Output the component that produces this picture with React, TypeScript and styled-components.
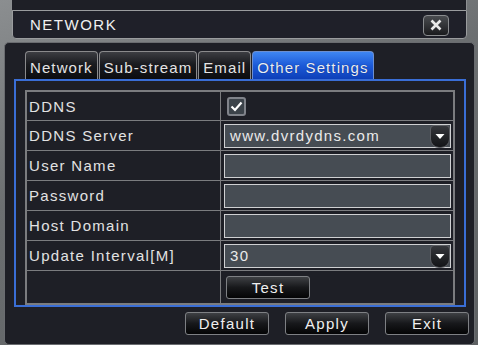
import React from 'react';
import styled, { createGlobalStyle } from 'styled-components';

const GlobalStyle = createGlobalStyle`
  html, body {
    margin: 0;
    padding: 0;
  }
  body {
    width: 478px;
    height: 345px;
    overflow: hidden;
    background: linear-gradient(160deg, #8b8e90 0%, #6c6f71 40%, #5e6163 100%);
    font-family: 'Liberation Sans', Arial, sans-serif;
  }
`;

const Screen = styled.div`
  width: 478px;
  height: 345px;
  display: flex;
  flex-direction: column;
`;

const TopStrip = styled.div`
  height: 10px;
  margin: 0 11px;
  background: #1e1f26;
  border-left: 1px solid #8d8f92;
  border-right: 1px solid #8d8f92;
`;

const TitleBar = styled.header`
  height: 28px;
  margin: 0 11px 0 12px;
  background: #1f2029;
  border: 1px solid #9a9c9e;
  border-radius: 0 0 4px 4px;
  display: flex;
  align-items: center;
  justify-content: space-between;
  padding: 0 17px 0 17px;
`;

const Title = styled.span`
  color: #f0f0f0;
  font-size: 15px;
  letter-spacing: 1.5px;
`;

const CloseButton = styled.button`
  width: 26px;
  height: 21px;
  padding: 0;
  margin-top: 1px;
  display: flex;
  align-items: center;
  justify-content: center;
  background: linear-gradient(#4a4c50, #1a1b1e);
  border: 1px solid #8a8c8f;
  border-radius: 4px;
`;

const Panel = styled.section`
  margin: 3px 3px 0 4px;
  height: 297px;
  background: #1e1f26;
  border: 1px solid #6a6c70;
  border-radius: 5px;
  display: flex;
  flex-direction: column;
  padding-top: 8px;
`;

const TabRow = styled.div`
  display: flex;
  gap: 1px;
  margin-left: 20px;
  height: 28px;
  position: relative;
  z-index: 1;
`;

const Tab = styled.div<{ $active?: boolean }>`
  height: 28px;
  box-sizing: border-box;
  padding: 3px 4px 0;
  display: flex;
  align-items: center;
  font-size: 15px;
  letter-spacing: 1.1px;
  color: ${(p) => (p.$active ? '#e8eef8' : '#e4e4e4')};
  border: 1px solid ${(p) => (p.$active ? '#6d8fd0' : '#8a8a8c')};
  border-bottom: none;
  border-radius: 4px 4px 0 0;
  background: ${(p) =>
    p.$active
      ? 'linear-gradient(#3f86f2 0%, #1c5ad8 50%, #0d3fb8 100%)'
      : 'linear-gradient(#3c3d42 0%, #1a1b1f 45%, #0b0c0f 100%)'};
  text-shadow: ${(p) => (p.$active ? '0 0 1px #0a1e60' : 'none')};
`;

const Frame = styled.div`
  margin: 0 8px 0 9px;
  height: 228px;
  box-sizing: border-box;
  border: 2px solid #3a6ed6;
  padding: 9px 9px 0 9px;
`;

const Table = styled.div`
  border: 2px solid #7b7c7f;
  display: flex;
  flex-direction: column;
`;

const Row = styled.div<{ $first?: boolean; $tall?: boolean }>`
  display: grid;
  grid-template-columns: 194px 1fr;
  height: ${(p) => (p.$first ? 28 : p.$tall ? 32 : 29)}px;
  border-top: ${(p) => (p.$first ? 'none' : '1px solid #7b7c7f')};
`;

const Label = styled.div`
  border-right: 1px solid #7b7c7f;
  display: flex;
  align-items: center;
  padding-left: 2px;
  color: #e2e2e2;
  font-size: 15px;
  letter-spacing: 1.3px;
`;

const Value = styled.div`
  display: flex;
  align-items: center;
  padding: 0 2px 0 3px;
`;

const Input = styled.div`
  flex: 1;
  height: 24px;
  box-sizing: border-box;
  background: #464c53;
  border: 1px solid #cfd0d2;
  display: flex;
  align-items: center;
  justify-content: space-between;
  padding-left: 5px;
  color: #eaeaea;
  font-size: 15px;
  letter-spacing: 1.3px;
`;

const DropButton = styled.div`
  width: 20px;
  height: 23px;
  box-sizing: border-box;
  margin-top: 1px;
  background: linear-gradient(#34363b, #141518);
  border: 1px solid #5c5e63;
  border-radius: 4px 4px 9px 9px;
  display: flex;
  align-items: center;
  justify-content: center;
`;

const Check = styled.div`
  width: 19px;
  height: 19px;
  box-sizing: border-box;
  margin-left: 3px;
  background: #3c434a;
  border: 2px solid #80838a;
  border-radius: 3px;
  display: flex;
  align-items: center;
  justify-content: center;
`;

const Button = styled.button<{ $w?: number }>`
  width: ${(p) => p.$w ?? 84}px;
  height: 23px;
  padding: 0;
  box-sizing: border-box;
  background: linear-gradient(#3e4044 0%, #17181b 50%, #040405 100%);
  border: 1px solid #7e8084;
  border-radius: 3px;
  color: #efefef;
  font-family: 'Liberation Sans', Arial, sans-serif;
  font-size: 15px;
  letter-spacing: 1.3px;
`;

const TestCell = styled(Value)`
  padding-left: 5px;
`;

const Footer = styled.div`
  display: flex;
  justify-content: flex-end;
  gap: 16px;
  margin: 5px 5px 0 0;
`;

const Arrow = () => (
  <svg width="10" height="7" viewBox="0 0 10 7">
    <path d="M0.5 1 L9.5 1 L5 6 Z" fill="#ffffff" />
  </svg>
);

const CheckMark = () => (
  <svg width="13" height="11" viewBox="0 0 13 11">
    <path d="M1.5 5.5 L5 9 L11.5 1.5" stroke="#ffffff" strokeWidth="2.2" fill="none" />
  </svg>
);

const CloseIcon = () => (
  <svg width="12" height="12" viewBox="0 0 12 12">
    <path d="M1.5 1.5 L10.5 10.5 M10.5 1.5 L1.5 10.5" stroke="#e8e8e8" strokeWidth="2.6" />
  </svg>
);

const tabs = ['Network', 'Sub-stream', 'Email', 'Other Settings'];

const App: React.FC = () => (
  <Screen>
    <GlobalStyle />
    <TopStrip />
    <TitleBar>
      <Title>NETWORK</Title>
      <CloseButton>
        <CloseIcon />
      </CloseButton>
    </TitleBar>
    <Panel>
      <TabRow>
        {tabs.map((t, i) => (
          <Tab key={t} $active={i === 3}>
            {t}
          </Tab>
        ))}
      </TabRow>
      <Frame>
        <Table>
          <Row $first>
            <Label>DDNS</Label>
            <Value>
              <Check>
                <CheckMark />
              </Check>
            </Value>
          </Row>
          <Row>
            <Label>DDNS Server</Label>
            <Value>
              <Input>
                www.dvrdydns.com
                <DropButton>
                  <Arrow />
                </DropButton>
              </Input>
            </Value>
          </Row>
          <Row>
            <Label>User Name</Label>
            <Value>
              <Input />
            </Value>
          </Row>
          <Row>
            <Label>Password</Label>
            <Value>
              <Input />
            </Value>
          </Row>
          <Row>
            <Label>Host Domain</Label>
            <Value>
              <Input />
            </Value>
          </Row>
          <Row>
            <Label>Update Interval[M]</Label>
            <Value>
              <Input>
                30
                <DropButton>
                  <Arrow />
                </DropButton>
              </Input>
            </Value>
          </Row>
          <Row $tall>
            <Label />
            <TestCell>
              <Button>Test</Button>
            </TestCell>
          </Row>
        </Table>
      </Frame>
      <Footer>
        <Button>Default</Button>
        <Button>Apply</Button>
        <Button>Exit</Button>
      </Footer>
    </Panel>
  </Screen>
);

export default App;
